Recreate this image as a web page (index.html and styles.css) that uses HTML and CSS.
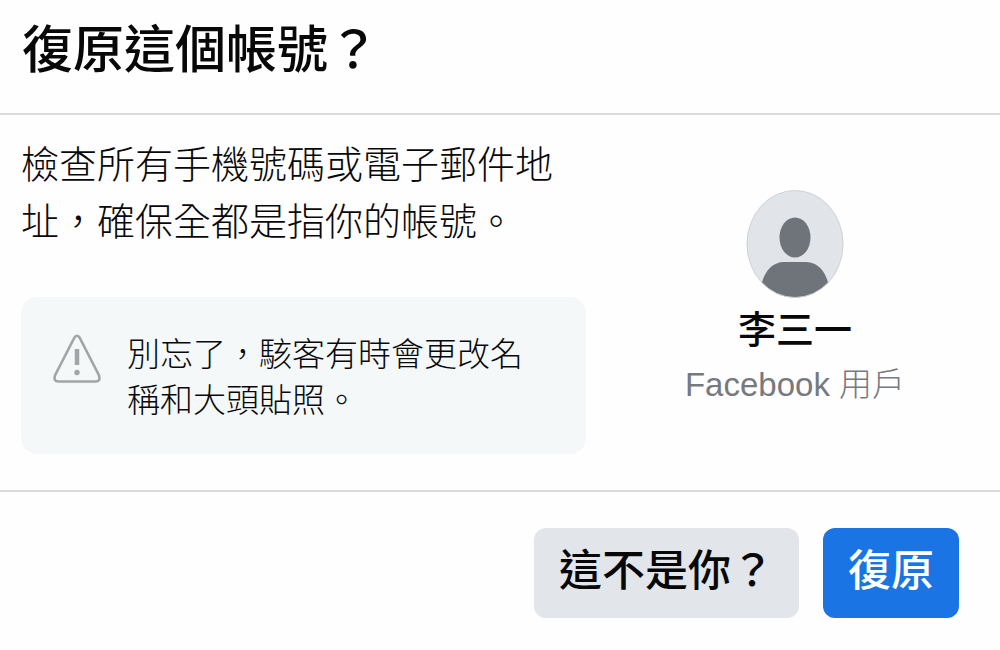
FILE: index.html
```html
<!DOCTYPE html>
<html lang="zh-Hant">
<head>
    <meta charset="UTF-8">
    <title>復原這個帳號？</title>
    <link rel="stylesheet" href="styles.css">
</head>

<body>
    <header class="header">
        <h1>復原這個帳號？</h1>
    </header>

    <main class="content">
        <div class="info">
            <p class="message">檢查所有手機號碼或電子郵件地址，確保全都是指你的帳號。</p>
            <div class="notice">
                <svg class="warning" viewBox="0 0 48 50" aria-hidden="true">
                    <path d="M21.5 3.5 Q24 0 26.5 3.5 L45.8 41 Q48 47.5 42.5 47.5 H5.5 Q0 47.5 2.2 41 Z" fill="none" stroke="#a2a5a8" stroke-width="2.6"/>
                    <path d="M24 15 V31" stroke="#a2a5a8" stroke-width="4.5"/>
                    <circle cx="24" cy="38.5" r="2.7" fill="#a2a5a8"/>
                </svg>
                <p>別忘了，駭客有時會更改名稱和大頭貼照。</p>
            </div>
        </div>

        <div class="profile">
            <svg class="avatar" viewBox="0 0 98 108" aria-hidden="true">
                <clipPath id="face"><ellipse cx="49" cy="54" rx="48" ry="53.5"/></clipPath>
                <ellipse cx="49" cy="54" rx="48" ry="53.5" fill="#e1e5e9"/>
                <g fill="#6f737a" clip-path="url(#face)">
                    <ellipse cx="49" cy="47.5" rx="15.5" ry="20"/>
                    <path d="M14 108 C14 86 24 72 38 72 H60 C74 72 84 86 84 108 Z"/>
                </g>
                <ellipse cx="49" cy="54" rx="48" ry="53.5" fill="none" stroke="#cfd1d4"/>
            </svg>
            <h2>李三一</h2>
            <p>Facebook 用戶</p>
        </div>
    </main>

    <footer class="footer">
        <button type="button" class="btn">這不是你？</button>
        <button type="button" class="btn primary">復原</button>
    </footer>
</body>

</html>
```
FILE: styles.css
```css
* {
    box-sizing: border-box;
}

body {
    margin: 0;
    background: #fefefe;
    color: #080809;
    font-family: "Liberation Sans", "Noto Sans CJK TC", sans-serif;
}

h1, h2, p {
    margin: 0;
}

/* the Latin family has no medium weight, so the headings name the CJK one first */
h1, h2, .btn {
    font-family: "Noto Sans CJK TC", sans-serif;
    font-weight: 500;
}

.header {
    padding: 8px 22px 29px;
    border-bottom: 2px solid #dadcdc;
}

h1 {
    font-size: 51px;
    line-height: 76px;
}

.content {
    display: grid;
    grid-template-columns: 565fr 414fr;
    padding: 22px 0 36px 21px;
    border-bottom: 2px solid #dadcdc;
}

.message {
    font-size: 38px;
    font-weight: 300;
    line-height: 57px;
}

.notice {
    display: flex;
    gap: 26px;
    align-items: flex-start;
    margin-top: 46px;
    padding: 35px 32px 30px;
    border-radius: 16px;
    background: #f5f8f9;
    font-size: 33px;
    font-weight: 300;
    line-height: 46px;
}

.warning {
    flex: none;
    width: 48px;
    height: 50px;
    margin-top: 2px;
}

.profile {
    display: flex;
    flex-direction: column;
    align-items: center;
    padding: 53px 0 0 4px;
}

.avatar {
    width: 98px;
    height: 108px;
}

h2 {
    font-size: 38px;
    line-height: 57px;
}

.profile p {
    margin-top: 7px;
    color: #76797e;
    font-size: 33px;
    font-weight: 300;
    line-height: 46px;
}

.footer {
    display: flex;
    justify-content: flex-end;
    gap: 24px;
    padding: 36px 41px;
}

.btn {
    height: 90px;
    padding: 0 25px 12px;
    border: 0;
    border-radius: 12px;
    background: #e2e5e9;
    color: #080809;
    font-size: 43px;
}

.primary {
    background: #1b74e4;
    color: #fff;
}
```
